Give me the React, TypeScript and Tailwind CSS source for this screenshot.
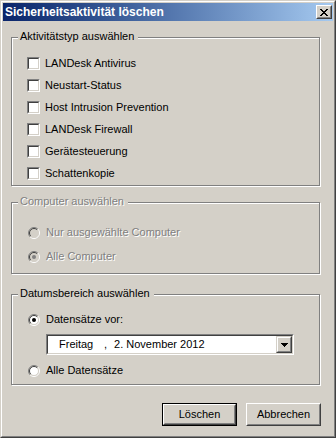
import React from "react";

const face = "bg-[#D4D0C8]";

const Checkbox = () => (
  <div className="w-[13px] h-[13px] shrink-0 border border-t-[#808080] border-l-[#808080] border-r-white border-b-white">
    <div className="w-full h-full bg-white border border-t-[#404040] border-l-[#404040] border-r-[#D4D0C8] border-b-[#D4D0C8]" />
  </div>
);

const Radio = ({ checked, disabled }: { checked?: boolean; disabled?: boolean }) => (
  <svg width="12" height="12" viewBox="0 0 12 12" className="shrink-0">
    <circle cx="6" cy="6" r="4.5" fill={disabled ? "#D4D0C8" : "#fff"} />
    <path d="M2.1 9.9 A5.5 5.5 0 0 1 9.9 2.1" fill="none" stroke="#808080" />
    <path d="M9.9 2.1 A5.5 5.5 0 0 1 2.1 9.9" fill="none" stroke="#fff" />
    <path d="M2.8 9.2 A4.5 4.5 0 0 1 9.2 2.8" fill="none" stroke="#404040" />
    <path d="M9.2 2.8 A4.5 4.5 0 0 1 2.8 9.2" fill="none" stroke="#D4D0C8" />
    {checked && <circle cx="6" cy="6" r="2" fill={disabled ? "#808080" : "#000"} />}
  </svg>
);

const CloseGlyph = () => {
  const rows = [
    [0, 1, 6, 7],
    [1, 2, 5, 6],
    [2, 3, 4, 5],
    [3, 4],
    [2, 3, 4, 5],
    [1, 2, 5, 6],
    [0, 1, 6, 7],
  ];
  return (
    <svg width="8" height="7" viewBox="0 0 8 7" shapeRendering="crispEdges">
      {rows.map((r, y) => r.map((x) => <rect key={`${x}-${y}`} x={x} y={y} width="1" height="1" fill="#000" />))}
    </svg>
  );
};

const GroupBox = ({
  title,
  disabled,
  className,
  children,
}: {
  title: string;
  disabled?: boolean;
  className: string;
  children: React.ReactNode;
}) => (
  <div
    className={`relative ml-[8px] w-[309px] border border-[#808080] shadow-[inset_1px_1px_0_#fff,1px_1px_0_#fff] ${className}`}
  >
    <span
      className={`absolute left-[6px] top-[-8px] ${face} pl-[2px] pr-[4px] leading-[13px] ${
        disabled ? "text-[#808080] [text-shadow:1px_1px_0_#fff]" : "text-black"
      }`}
    >
      {title}
    </span>
    {children}
  </div>
);

const Button = ({ label, isDefault }: { label: string; isDefault?: boolean }) =>
  isDefault ? (
    <div className="w-[75px] h-[23px] border border-black">
      <div className="w-full h-full border border-t-white border-l-white border-r-[#404040] border-b-[#404040]">
        <div className="w-full h-full flex items-center justify-center border border-transparent border-r-[#808080] border-b-[#808080]">
          {label}
        </div>
      </div>
    </div>
  ) : (
    <div className="w-[75px] h-[23px] border border-t-white border-l-white border-r-[#404040] border-b-[#404040]">
      <div className="w-full h-full flex items-center justify-center border border-t-[#D4D0C8] border-l-[#D4D0C8] border-r-[#808080] border-b-[#808080]">
        {label}
      </div>
    </div>
  );

const types = [
  "LANDesk Antivirus",
  "Neustart-Status",
  "Host Intrusion Prevention",
  "LANDesk Firewall",
  "Gerätesteuerung",
  "Schattenkopie",
];

export default function App() {
  return (
    <div className="w-[336px] h-[438px] font-['Liberation_Sans',Arial,sans-serif] text-[11px] leading-[13px] text-black">
      <div className="w-full h-full border border-t-[#D4D0C8] border-l-[#D4D0C8] border-r-[#404040] border-b-[#404040]">
        <div className={`w-full h-full border border-t-white border-l-white border-r-[#808080] border-b-[#808080] p-px ${face} flex flex-col`}>
          {/* caption */}
          <div className="h-[18px] shrink-0 flex items-center justify-between bg-linear-to-r from-[#0A246A] to-[#A6CAF0] pl-[2px] pr-[1px]">
            <span className="font-bold text-white text-[12px] leading-[14px]">Sicherheitsaktivität löschen</span>
            <div className="w-[16px] h-[14px] border border-t-white border-l-white border-r-[#404040] border-b-[#404040]">
              <div className={`w-full h-full ${face} flex items-center justify-center border border-t-[#D4D0C8] border-l-[#D4D0C8] border-r-[#808080] border-b-[#808080]`}>
                <CloseGlyph />
              </div>
            </div>
          </div>

          {/* activity types */}
          <GroupBox title="Aktivitätstyp auswählen" className="mt-[16px] h-[149px] pt-[19px] pl-[15px]">
            <div className="flex flex-col gap-[9px]">
              {types.map((t) => (
                <div key={t} className="flex items-center h-[13px] gap-[5px]">
                  <Checkbox />
                  <span>{t}</span>
                </div>
              ))}
            </div>
          </GroupBox>

          {/* computers */}
          <GroupBox title="Computer auswählen" disabled className="mt-[16px] h-[72px] pt-[23px] pl-[16px]">
            <div className="flex flex-col gap-[11px] text-[#808080] [text-shadow:1px_1px_0_#fff]">
              <div className="flex items-center h-[13px] gap-[6px]">
                <Radio disabled />
                <span>Nur ausgewählte Computer</span>
              </div>
              <div className="flex items-center h-[13px] gap-[6px]">
                <Radio disabled checked />
                <span>Alle Computer</span>
              </div>
            </div>
          </GroupBox>

          {/* date range */}
          <GroupBox title="Datumsbereich auswählen" className="mt-[20px] h-[91px] pt-[18px] pl-[16px]">
            <div className="flex items-center h-[13px] gap-[6px]">
              <Radio checked />
              <span>Datensätze vor:</span>
            </div>
            <div className="mt-[8px] ml-[18px] w-[248px] h-[21px] border border-t-[#808080] border-l-[#808080] border-r-white border-b-white">
              <div className="w-full h-full bg-white border border-t-[#404040] border-l-[#404040] border-r-[#D4D0C8] border-b-[#D4D0C8] flex items-center">
                <span className="pl-[11px] w-[56px] inline-block">Freitag</span>
                <span>,</span>
                <span className="ml-[7px] flex-1">2. November 2012</span>
                <div className="w-[16px] h-[17px] border border-t-[#D4D0C8] border-l-[#D4D0C8] border-r-[#404040] border-b-[#404040]">
                  <div className={`w-full h-full ${face} flex items-center justify-center border border-t-white border-l-white border-r-[#808080] border-b-[#808080]`}>
                    <svg width="7" height="4" viewBox="0 0 7 4" shapeRendering="crispEdges">
                      <path d="M0 0h7v1h-1v1h-1v1h-1v1h-1v-1h-1v-1h-1v-1h-1z" fill="#000" />
                    </svg>
                  </div>
                </div>
              </div>
            </div>
            <div className="mt-[9px] flex items-center h-[13px] gap-[6px]">
              <Radio />
              <span>Alle Datensätze</span>
            </div>
          </GroupBox>

          {/* buttons */}
          <div className="mt-[18px] flex justify-end gap-[9px] pr-[12px]">
            <Button label="Löschen" isDefault />
            <Button label="Abbrechen" />
          </div>
        </div>
      </div>
    </div>
  );
}
